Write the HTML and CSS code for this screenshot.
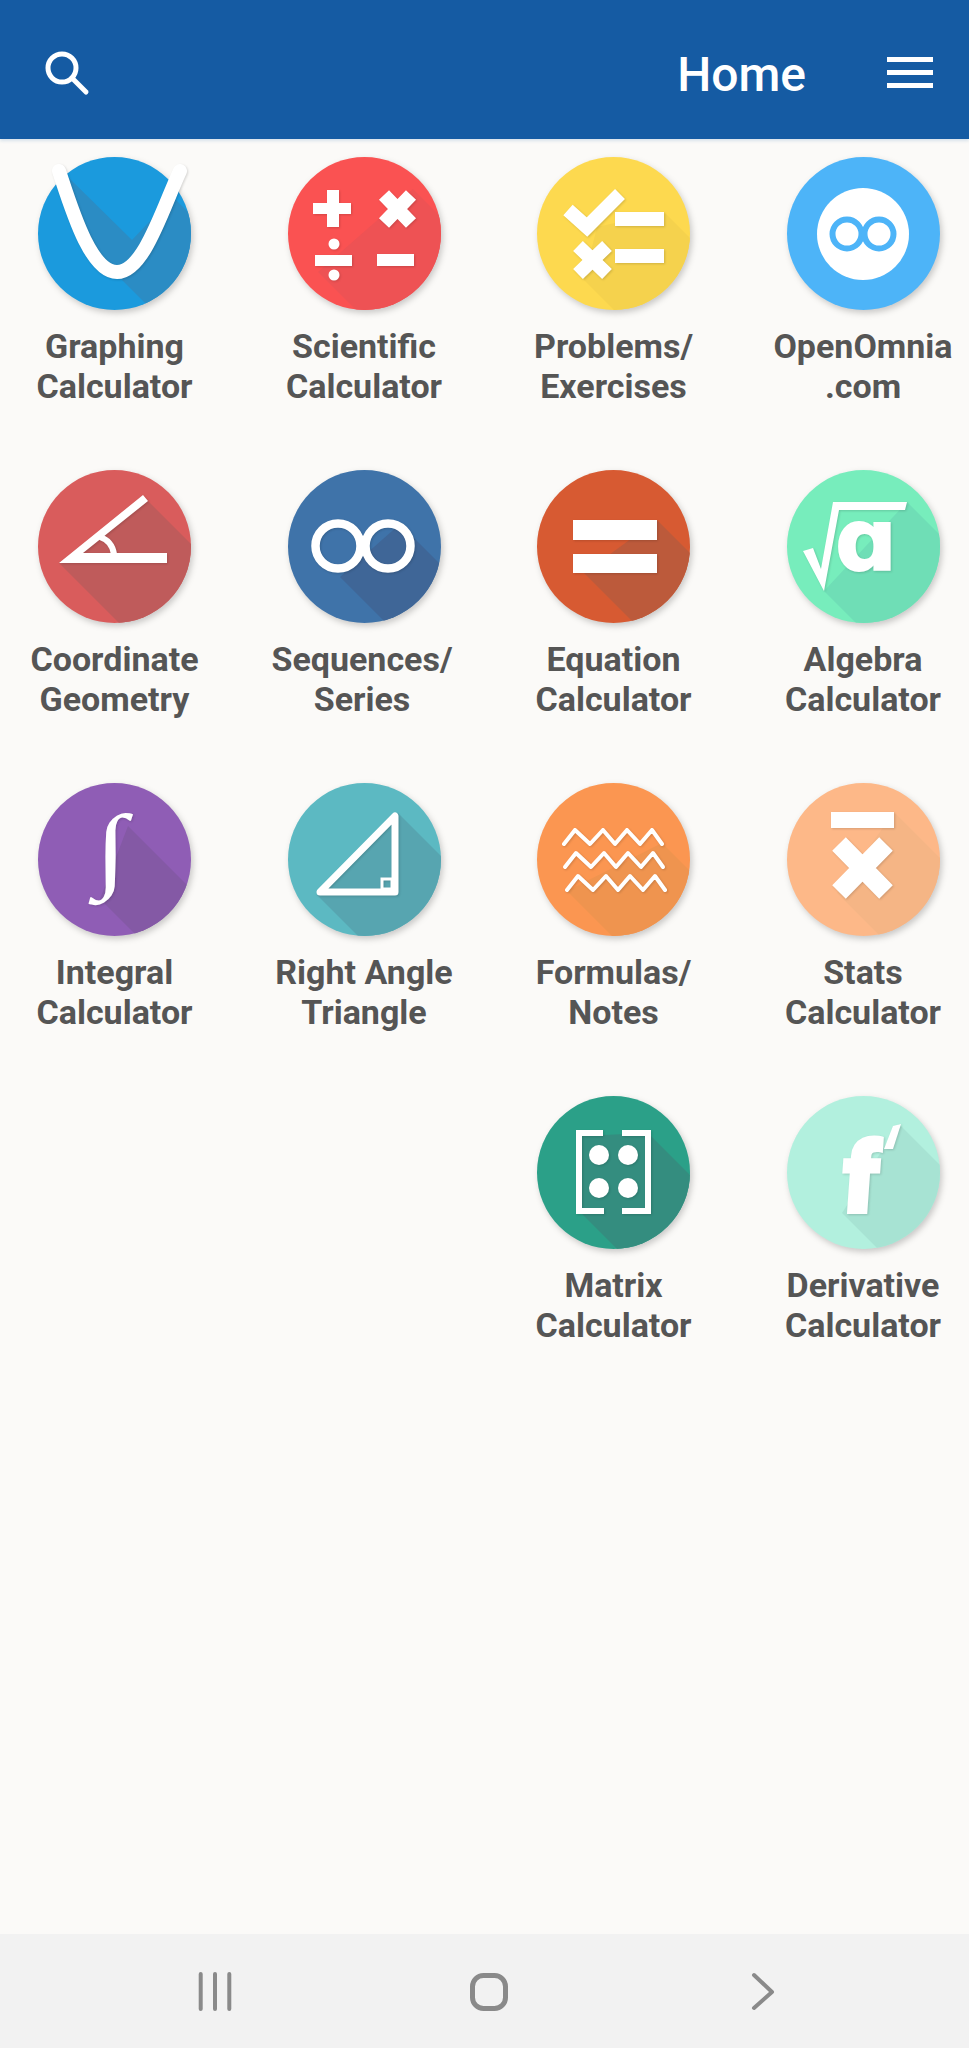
FILE: index.html
```html
<!DOCTYPE html>
<html lang="en">
<head>
    <meta charset="UTF-8">
    <meta name="viewport" content="width=device-width, initial-scale=1.0">
    <title>Home</title>
    <link rel="stylesheet" href="styles.css">
</head>
<body>
    <header class="topbar">
        <svg class="search" width="60" height="60" viewBox="0 0 60 60">
            <circle cx="20" cy="22" r="14"/>
            <path d="M30 32 L44 46"/>
        </svg>
        <div class="topbar-right">
            <span class="title">Home</span>
            <div class="menu"><span></span><span></span><span></span></div>
        </div>
    </header>

    <main class="grid">
        <div class="item graph">
            <svg class="icon" viewBox="0 0 153 153">
                <defs><clipPath id="disc"><circle cx="76.5" cy="76.5" r="76.5"/></clipPath></defs>
                <circle class="disc" cx="76.5" cy="76.5" r="76.5"/>
                <path class="shade" clip-path="url(#disc)" d="M30 20 L94 83 L135 40 L285 190 L229 268 L79 118 L50 90 L20 15 Z"/>
                <path class="line glyph" stroke-width="14" stroke-linecap="round" d="M21 14 C33 50 52 115 79 115 C106 115 125 50 142 14"/>
            </svg>
            <div class="label">Graphing<br>Calculator</div>
        </div>
        <div class="item sci">
            <svg class="icon" viewBox="0 0 153 153">
                <circle class="disc" cx="76.5" cy="76.5" r="76.5"/>
                <path class="shade" clip-path="url(#disc)" d="M125 32 L275 182 L180 265 L30 115 Z"/>
                <g class="glyph">
                    <path class="solid" d="M25 46 H39 V33 H51 V46 H63 V57 H51 V70 H39 V57 H25 Z"/>
                    <path class="line" stroke-width="14" d="M96 38 L123 66 M123 38 L96 66"/>
                    <rect class="solid" x="27" y="98" width="37" height="11"/>
                    <circle class="solid" cx="46" cy="87" r="5.5"/>
                    <circle class="solid" cx="46" cy="118" r="5.5"/>
                    <rect class="solid" x="89" y="97" width="37" height="12"/>
                </g>
            </svg>
            <div class="label">Scientific<br>Calculator</div>
        </div>
        <div class="item problems">
            <svg class="icon" viewBox="0 0 153 153">
                <circle class="disc" cx="76.5" cy="76.5" r="76.5"/>
                <path class="shade" clip-path="url(#disc)" d="M127 55 L277 205 L197 273 L47 123 L60 70 Z"/>
                <g class="glyph">
                    <path class="line" stroke-width="14" d="M31 53 L50 70 L83 37"/>
                    <rect class="solid" x="78" y="55" width="49" height="14"/>
                    <path class="line" stroke-width="14" d="M41 89 L70 117 M70 89 L41 117"/>
                    <rect class="solid" x="78" y="92" width="49" height="14"/>
                </g>
            </svg>
            <div class="label">Problems/<br>Exercises</div>
        </div>
        <div class="item omnia">
            <svg class="icon" viewBox="0 0 153 153">
                <circle class="disc" cx="76.5" cy="76.5" r="76.5"/>
                <circle class="solid" cx="76" cy="77" r="46"/>
                <circle class="ring" cx="60" cy="77" r="14.5"/>
                <circle class="ring" cx="92" cy="77" r="14.5"/>
            </svg>
            <div class="label">OpenOmnia<br>.com</div>
        </div>

        <div class="item coord">
            <svg class="icon" viewBox="0 0 153 153">
                <circle class="disc" cx="76.5" cy="76.5" r="76.5"/>
                <path class="shade" clip-path="url(#disc)" d="M108 29 L258 179 L171 243 L21 93 Z"/>
                <g class="glyph">
                    <path class="solid" d="M21 93 L105 25 L110 31 L45 83 H129 V93 Z"/>
                    <path class="line" stroke-width="6" d="M62 67 Q74 71 76 84"/>
                </g>
            </svg>
            <div class="label">Coordinate<br>Geometry</div>
        </div>
        <div class="item seq">
            <svg class="icon" viewBox="0 0 153 153">
                <circle class="disc" cx="76.5" cy="76.5" r="76.5"/>
                <path class="shade" clip-path="url(#disc)" d="M112 54 L262 204 L202 257 L52 107 Z"/>
                <g class="glyph">
                    <circle class="line" stroke-width="8.5" cx="50" cy="76" r="22.5"/>
                    <circle class="line" stroke-width="8.5" cx="100" cy="76" r="22.5"/>
                </g>
            </svg>
            <div class="label label-seq">Sequences/<br>Series</div>
        </div>
        <div class="item equation">
            <svg class="icon" viewBox="0 0 153 153">
                <circle class="disc" cx="76.5" cy="76.5" r="76.5"/>
                <path class="shade" clip-path="url(#disc)" d="M120 50 L270 200 L197 253 L47 103 Z"/>
                <g class="glyph">
                    <rect class="solid" x="36" y="50" width="84" height="20"/>
                    <rect class="solid" x="36" y="84" width="84" height="19"/>
                </g>
            </svg>
            <div class="label">Equation<br>Calculator</div>
        </div>
        <div class="item algebra">
            <svg class="icon" viewBox="0 0 153 153">
                <circle class="disc" cx="76.5" cy="76.5" r="76.5"/>
                <path class="shade" clip-path="url(#disc)" d="M120 32 L270 182 L187 271 L37 121 Z"/>
                <g class="glyph">
                    <path class="solid" d="M16 81 L26 78 L34 99 L46 32 H120 L118 40 H52 L37 121 Z"/>
                    <text class="mark mark-a" x="79" y="100">ɑ</text>
                </g>
            </svg>
            <div class="label">Algebra<br>Calculator</div>
        </div>

        <div class="item integral">
            <svg class="icon" viewBox="0 0 153 153">
                <circle class="disc" cx="76.5" cy="76.5" r="76.5"/>
                <path class="shade" clip-path="url(#disc)" d="M90 43 L240 193 L212 266 L62 116 Z"/>
                <g class="glyph"><text class="mark mark-int" x="75" y="97" transform="translate(-21 0) scale(1.25 1)">∫</text></g>
            </svg>
            <div class="label">Integral<br>Calculator</div>
        </div>
        <div class="item triangle">
            <svg class="icon" viewBox="0 0 153 153">
                <circle class="disc" cx="76.5" cy="76.5" r="76.5"/>
                <path class="shade" clip-path="url(#disc)" d="M110 30 L260 180 L179 262 L29 112 Z"/>
                <g class="glyph">
                    <path class="line" stroke-width="7" stroke-linejoin="round" d="M107 33 V109 H32 Z"/>
                    <rect class="line" stroke-width="3" x="94" y="96" width="10" height="10"/>
                </g>
            </svg>
            <div class="label">Right Angle<br>Triangle</div>
        </div>
        <div class="item formulas">
            <svg class="icon" viewBox="0 0 153 153">
                <circle class="disc" cx="76.5" cy="76.5" r="76.5"/>
                <path class="shade" clip-path="url(#disc)" d="M125 60 L275 210 L180 258 L30 108 Z"/>
                <g class="glyph">
                    <path class="line" stroke-width="4" stroke-linecap="round" stroke-linejoin="round" d="M27 61 L38 47 L53 61 L66 47 L78 61 L90 47 L103 61 L115 47 L125 61"/>
                    <path class="line" stroke-width="4" stroke-linecap="round" stroke-linejoin="round" d="M28 84 L39 70 L54 84 L67 70 L79 84 L91 70 L104 84 L116 70 L126 84"/>
                    <path class="line" stroke-width="4" stroke-linecap="round" stroke-linejoin="round" d="M30 107 L41 93 L56 107 L69 93 L81 107 L93 93 L106 107 L118 93 L128 107"/>
                </g>
            </svg>
            <div class="label">Formulas/<br>Notes</div>
        </div>
        <div class="item stats">
            <svg class="icon" viewBox="0 0 153 153">
                <circle class="disc" cx="76.5" cy="76.5" r="76.5"/>
                <path class="shade" clip-path="url(#disc)" d="M107 29 L257 179 L200 260 L50 110 Z"/>
                <g class="glyph">
                    <rect class="solid" x="44" y="29" width="63" height="16"/>
                    <path class="line" stroke-width="19" d="M52 61 L99 109 M99 61 L52 109"/>
                </g>
            </svg>
            <div class="label">Stats<br>Calculator</div>
        </div>

        <div class="item matrix first-in-row">
            <svg class="icon" viewBox="0 0 153 153">
                <circle class="disc" cx="76.5" cy="76.5" r="76.5"/>
                <path class="shade" clip-path="url(#disc)" d="M45 40 L111 37 L261 187 L192 265 L42 115 Z"/>
                <g class="glyph">
                    <path class="line" stroke-width="6" d="M66 37 H42 V115 H67"/>
                    <path class="line" stroke-width="6" d="M85 37 H111 V115 H85"/>
                    <circle class="solid" cx="62" cy="59" r="10"/>
                    <circle class="solid" cx="91" cy="59" r="10"/>
                    <circle class="solid" cx="62" cy="92" r="10"/>
                    <circle class="solid" cx="91" cy="92" r="10"/>
                </g>
            </svg>
            <div class="label">Matrix<br>Calculator</div>
        </div>
        <div class="item derivative">
            <svg class="icon" viewBox="0 0 153 153">
                <circle class="disc" cx="76.5" cy="76.5" r="76.5"/>
                <path class="shade" clip-path="url(#disc)" d="M112 28 L262 178 L205 267 L55 117 Z"/>
                <g class="glyph">
                    <text class="mark mark-f" x="80" y="116" transform="skewX(-4)">f</text>
                    <path class="solid" d="M106 30 L114 28 L106 53 L97 53 Z"/>
                </g>
            </svg>
            <div class="label">Derivative<br>Calculator</div>
        </div>
    </main>

    <nav class="navbar">
        <svg width="48" height="48" viewBox="0 0 48 48">
            <path d="M9.7 7 V42 M24 7 V42 M38.3 7 V42"/>
        </svg>
        <svg width="48" height="48" viewBox="0 0 48 48">
            <rect x="7.5" y="8.5" width="33" height="33" rx="11"/>
        </svg>
        <svg width="48" height="48" viewBox="0 0 48 48">
            <path d="M15 8 L33 25 L15 41"/>
        </svg>
    </nav>
</body>
</html>
```

FILE: styles.css
```css
body {
    margin: 0;
    height: 2048px;
    display: flex;
    flex-direction: column;
    background-color: #fbfaf8;
    font-family: Roboto, "Liberation Sans", sans-serif;
    overflow: hidden;
}

/* top bar */
.topbar {
    height: 139px;
    flex-shrink: 0;
    display: flex;
    align-items: center;
    justify-content: space-between;
    padding: 0 36px 0 42px;
    background-color: #155ba3;
    box-shadow: 0 2px 3px rgba(21, 91, 163, 0.15);
}
.search {
    margin-top: 12px;
}
.search circle, .search path {
    fill: none;
    stroke: #fff;
    stroke-width: 5;
    stroke-linecap: round;
}
.topbar-right {
    display: flex;
    align-items: center;
    gap: 81px;
}
.title {
    color: #fff;
    font-size: 48px;
    font-weight: 500;
    line-height: 54px;
    margin-top: 10px;
}
.menu {
    width: 46px;
    display: flex;
    flex-direction: column;
    gap: 8px;
    margin-top: 5px;
}
.menu span {
    height: 5px;
    background-color: #fff;
}

/* icon grid */
.grid {
    flex: 1;
    display: grid;
    grid-template-columns: repeat(4, 190px);
    grid-auto-rows: 313px;
    column-gap: 59.5px;
    padding: 18px 0 0 19.5px;
}
.item {
    display: flex;
    flex-direction: column;
    align-items: center;
}
.first-in-row {
    grid-column-start: 3;
}
.label {
    margin-top: 16px;
    color: #555;
    font-size: 34px;
    font-weight: 700;
    line-height: 40px;
    text-align: center;
    white-space: nowrap;
}
.label-seq {
    padding-right: 4px;
}
.icon {
    width: 153px;
    height: 153px;
    overflow: visible;
}
.disc {
    filter: drop-shadow(2px 3px 3px rgba(0, 0, 0, 0.2));
}
.glyph {
    filter: drop-shadow(1px 1px 1px rgba(0, 0, 0, 0.15));
}
.solid {
    fill: #fff;
}
.line {
    fill: none;
    stroke: #fff;
}
.ring {
    fill: none;
    stroke: #4db4f8;
    stroke-width: 6;
}
.mark {
    fill: #fff;
    text-anchor: middle;
}
.mark-a {
    font-family: "DejaVu Sans", sans-serif;
    font-size: 86px;
    font-weight: bold;
    stroke: #fff;
    stroke-width: 2;
}
.mark-f {
    font-family: Roboto, sans-serif;
    font-size: 98px;
    font-weight: 900;
    stroke: #fff;
    stroke-width: 4;
}
.mark-int {
    font-family: "Liberation Serif", serif;
    font-size: 94px;
    font-style: italic;
}

/* icon colours */
.graph .disc { fill: #1b9add; }
.graph .shade { fill: #2b8cc4; }
.sci .disc { fill: #fa5252; }
.sci .shade { fill: #ee5254; }
.problems .disc { fill: #fdd94f; }
.problems .shade { fill: #f5d24d; }
.omnia .disc { fill: #4db4f8; }
.coord .disc { fill: #d95c5c; }
.coord .shade { fill: #bf5b5b; }
.seq .disc { fill: #3f73a9; }
.seq .shade { fill: #3f6697; }
.equation .disc { fill: #d75a32; }
.equation .shade { fill: #bc5a3b; }
.algebra .disc { fill: #77edbc; }
.algebra .shade { fill: #6fdeb6; }
.integral .disc { fill: #8f5db5; }
.integral .shade { fill: #8459a5; }
.triangle .disc { fill: #5cb9c2; }
.triangle .shade { fill: #57a5b0; }
.formulas .disc { fill: #fb9651; }
.formulas .shade { fill: #ef944f; }
.stats .disc { fill: #fdb888; }
.stats .shade { fill: #f5b585; }
.matrix .disc { fill: #2ba088; }
.matrix .shade { fill: #348d7f; }
.derivative .disc { fill: #b2f0de; }
.derivative .shade { fill: #a7e3d3; }

/* bottom nav */
.navbar {
    height: 114px;
    flex-shrink: 0;
    display: flex;
    align-items: center;
    gap: 226px;
    padding-left: 191px;
    background-color: #f2f2f2;
}
.navbar path, .navbar rect {
    fill: none;
    stroke: #8a8a8a;
    stroke-width: 4;
    stroke-linecap: round;
    stroke-linejoin: round;
}
.navbar rect {
    stroke-width: 5;
}
```
